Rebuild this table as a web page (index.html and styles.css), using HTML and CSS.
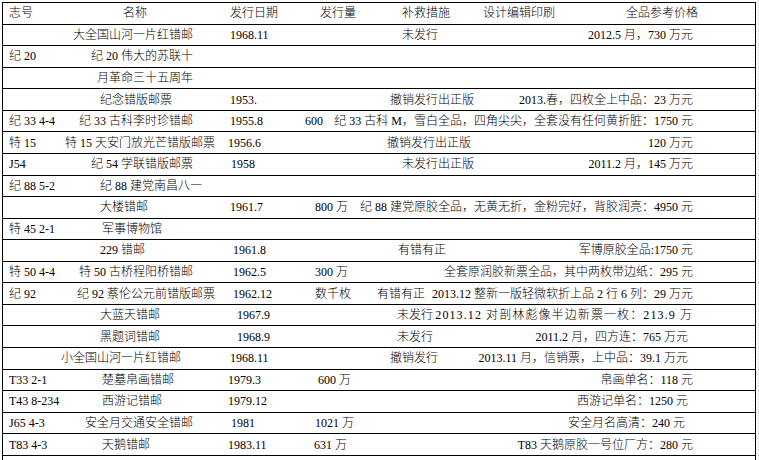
FILE: index.html
```html
<!DOCTYPE html>
<html lang="zh-CN">
<head>
<meta charset="utf-8">
<title>错版邮票</title>
<link rel="stylesheet" href="styles.css">
</head>
<body>
<div class="sheet">
  <div class="tbl">
    <div class="row">
      <span class="c-id">志号</span>
      <span class="c-name h-name">名称</span>
      <span class="c-date">发行日期</span>
      <span class="c-qty q20">发行量</span>
      <span class="c-rem h-rem">补救措施</span>
      <span class="c-des">设计编辑印刷</span>
      <span class="c-price p57">全品参考价格</span>
    </div>
    <div class="row">
      <span class="c-id"></span>
      <span class="c-name nr">大全国山河一片红错邮</span>
      <span class="c-date">1968.11</span>
      <span class="c-qty"></span>
      <span class="c-rem">未发行</span>
      <span class="c-price">2012.5 月，730 万元</span>
    </div>
    <div class="row">
      <span class="c-id">纪 20</span>
      <span class="c-name nr">纪 20 伟大的苏联十</span>
    </div>
    <div class="row">
      <span class="c-id"></span>
      <span class="c-name nr">月革命三十五周年</span>
    </div>
    <div class="row">
      <span class="c-id"></span>
      <span class="c-name nl">纪念错版邮票</span>
      <span class="c-date">1953.</span>
      <span class="c-qty"></span>
      <span class="c-rem r15">撤销发行出正版</span>
      <span class="c-price">2013.春，四枚全上中品：23 万元</span>
    </div>
    <div class="row">
      <span class="c-id">纪 33 4-4</span>
      <span class="c-name nr">纪 33 古科李时珍错邮</span>
      <span class="c-date">1955.8</span>
      <span class="c-qty q5">600</span>
      <span class="c-price">纪 33 古科 M，雪白全品，四角尖尖，全套没有任何黄折脏：1750 元</span>
    </div>
    <div class="row">
      <span class="c-id">特 15</span>
      <span class="c-name nw">特 15 天安门放光芒错版邮票</span>
      <span class="c-date d3">1956.6</span>
      <span class="c-qty"></span>
      <span class="c-rem r12">撤销发行出正版</span>
      <span class="c-price">120 万元</span>
    </div>
    <div class="row">
      <span class="c-id">J54</span>
      <span class="c-name nr">纪 54 学联错版邮票</span>
      <span class="c-date d6">1958</span>
      <span class="c-qty"></span>
      <span class="c-rem">未发行出正版</span>
      <span class="c-price">2011.2 月，145 万元</span>
    </div>
    <div class="row">
      <span class="c-id">纪 88 5-2</span>
      <span class="c-name nl">纪 88 建党南昌八一</span>
    </div>
    <div class="row">
      <span class="c-id"></span>
      <span class="c-name nl">大楼错邮</span>
      <span class="c-date">1961.7</span>
      <span class="c-qty">800 万</span>
      <span class="c-price">纪 88 建党原胶全品，无黄无折，金粉完好，背胶润亮：4950 元</span>
    </div>
    <div class="row">
      <span class="c-id">特 45 2-1</span>
      <span class="c-name nl2">军事博物馆</span>
    </div>
    <div class="row">
      <span class="c-id"></span>
      <span class="c-name nl">229 错邮</span>
      <span class="c-date d8">1961.8</span>
      <span class="c-qty"></span>
      <span class="c-rem r23">有错有正</span>
      <span class="c-price">军博原胶全品:1750 元</span>
    </div>
    <div class="row">
      <span class="c-id">特 50 4-4</span>
      <span class="c-name nr">特 50 古桥程阳桥错邮</span>
      <span class="c-date d8">1962.5</span>
      <span class="c-qty">300 万</span>
      <span class="c-price">全套原润胶新票全品，其中两枚带边纸：295 元</span>
    </div>
    <div class="row">
      <span class="c-id">纪 92</span>
      <span class="c-name nw">纪 92 蔡伦公元前错版邮票</span>
      <span class="c-date d8">1962.12</span>
      <span class="c-qty">数千枚</span>
      <span class="c-rem r2">有错有正</span>
      <span class="c-price">2013.12 整新一版轻微软折上品 2 行 6 列：29 万元</span>
    </div>
    <div class="row">
      <span class="c-id"></span>
      <span class="c-name nl">大蓝天错邮</span>
      <span class="c-date d12">1967.9</span>
      <span class="c-qty"></span>
      <span class="c-rem r22">未发行</span>
      <span class="c-price wide">2013.12 对剖林彪像半边新票一枚：213.9 万</span>
    </div>
    <div class="row">
      <span class="c-id"></span>
      <span class="c-name nl">黑题词错邮</span>
      <span class="c-date d12">1968.9</span>
      <span class="c-qty"></span>
      <span class="c-rem r22">未发行</span>
      <span class="c-price p67">2011.2 月，四方连：765 万元</span>
    </div>
    <div class="row">
      <span class="c-id"></span>
      <span class="c-name n0">小全国山河一片红错邮</span>
      <span class="c-date">1968.11</span>
      <span class="c-qty"></span>
      <span class="c-rem r15">撤销发行</span>
      <span class="c-price p67">2013.11 月，信销票，上中品：39.1 万元</span>
    </div>
    <div class="row">
      <span class="c-id">T33 2-1</span>
      <span class="c-name nl2">楚墓帛画错邮</span>
      <span class="c-date d3">1979.3</span>
      <span class="c-qty q18">600 万</span>
      <span class="c-price">帛画单名：118 元</span>
    </div>
    <div class="row">
      <span class="c-id">T43 8-234</span>
      <span class="c-name nl2">西游记错邮</span>
      <span class="c-date d3">1979.12</span>
      <span class="c-qty"></span>
      <span class="c-price p67">西游记单名：1250 元</span>
    </div>
    <div class="row">
      <span class="c-id">J65 4-3</span>
      <span class="c-name nr">安全月交通安全错邮</span>
      <span class="c-date d6">1981</span>
      <span class="c-qty">1021 万</span>
      <span class="c-price p70">安全月名高清：240 元</span>
    </div>
    <div class="row">
      <span class="c-id">T83 4-3</span>
      <span class="c-name nl2">天鹅错邮</span>
      <span class="c-date d3">1983.11</span>
      <span class="c-qty q14">631 万</span>
      <span class="c-price">T83 天鹅原胶一号位厂方：280 元</span>
    </div>
    <div class="row row-tail"></div>
  </div>
</div>
</body>
</html>
```

FILE: styles.css
```css
html, body {
  margin: 0;
  padding: 0;
  background: #fff;
  overflow: hidden;
}

.sheet {
  width: 759px;
  height: 460px;
  box-sizing: border-box;
  padding: 2px 0 0 2px;
  border-right: 1px dotted #d8d8d8;
  overflow: hidden;
  font-family: "Liberation Serif", "Noto Sans CJK SC", serif;
  font-size: 12px;
  font-weight: 300;
  color: #000;
}

.tbl {
  width: 754px;
  border-left: 1px solid #000;
  border-right: 1px solid #000;
  box-sizing: border-box;
}

.row {
  display: flex;
  align-items: center;
  height: 21.57px;
  box-sizing: border-box;
  border-top: 1px solid #000;
  white-space: nowrap;
  line-height: 14px;
}

.row-tail {
  height: 8px;
}

.c-id {
  flex: none;
  width: 58px;
  padding-left: 6px;
  box-sizing: border-box;
}

.c-name {
  flex: none;
  width: 164px;
  box-sizing: border-box;
}

.c-date {
  flex: none;
  width: 75px;
  padding-left: 5px;
  box-sizing: border-box;
}

.c-qty {
  flex: 0 1 auto;
  width: 75px;
  padding-left: 15px;
  box-sizing: border-box;
}

.c-rem {
  flex: none;
  padding-left: 27px;
}

.c-des {
  flex: none;
}

.c-price {
  flex: none;
  margin-left: auto;
  padding-right: 62px;
}

.wide {
  letter-spacing: 1.1px;
}

/* name column alignments */
.h-name { padding-left: 62px; }
.nr { text-align: right; padding-right: 32px; }
.nl { padding-left: 39px; }
.nl2 { padding-left: 41px; }
.nw { text-align: right; padding-right: 10px; }
.n0 { padding-left: 0; }

/* date column offsets */
.d3 { padding-left: 3px; }
.d6 { padding-left: 6px; }
.d8 { padding-left: 8px; }
.d12 { padding-left: 12px; }

/* quantity column offsets */
.q5 { padding-left: 5px; }
.q14 { padding-left: 14px; }
.q18 { padding-left: 18px; }
.q20 { padding-left: 20px; }

/* remedy column offsets */
.h-rem { width: 108px; box-sizing: border-box; }
.r2 { padding-left: 2px; }
.r12 { padding-left: 12px; }
.r15 { padding-left: 15px; }
.r22 { padding-left: 22px; }
.r23 { padding-left: 23px; }

/* price column offsets */
.p57 { padding-right: 57px; }
.p67 { padding-right: 67px; }
.p70 { padding-right: 70px; }
```
